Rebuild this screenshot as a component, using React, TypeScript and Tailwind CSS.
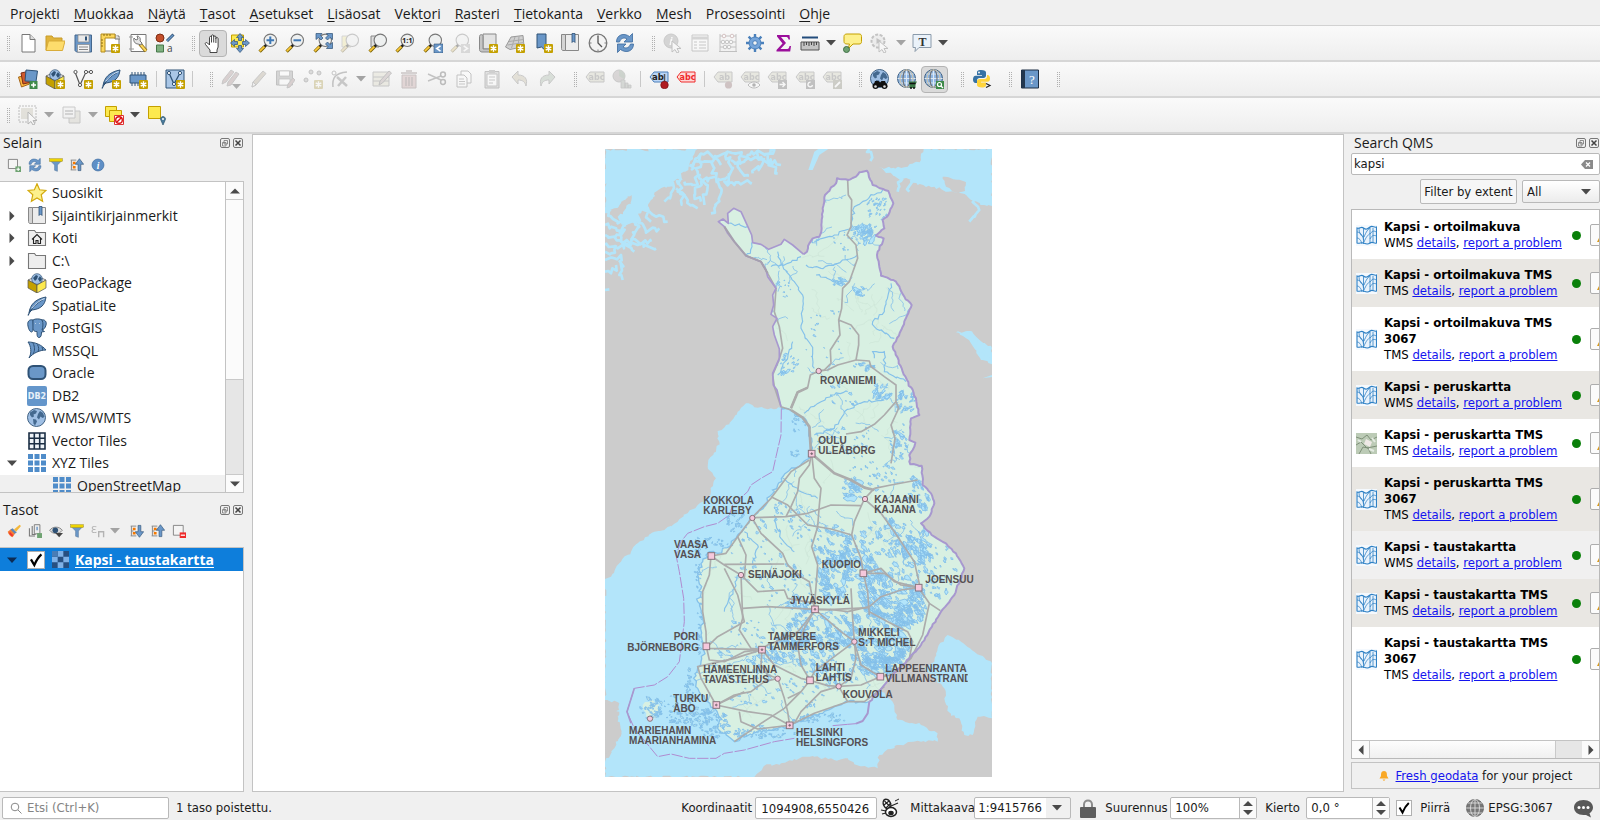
import React from "react";

type Kids = { children?: React.ReactNode };

/* ---------- icon building blocks ---------- */

function Ico({ children, off, small }: Kids & { off?: boolean; small?: boolean }) {
  return (
    <svg
      viewBox="0 0 20 20"
      aria-hidden="true"
      className={(small ? "size-[14px]" : "size-5") + " shrink-0 " + (off ? "opacity-35 saturate-50" : "")}
    >
      {children}
    </svg>
  );
}

const B = "#6a97c8";
const D = "#2f5276";

const NewBadge = () => (
  <g>
    <rect x="11" y="11" width="9" height="9" rx="1" fill="#c4a000" />
    <path d="M15.5 12.3v6.4M12.7 13.9l5.6 3.2M18.3 13.9l-5.6 3.2" stroke="#fff" strokeWidth="1.4" />
  </g>
);

const Lens = ({ fill = "#eef0f0" }: { fill?: string }) => (
  <g>
    <circle cx="12.3" cy="7.3" r="6.2" fill={fill} stroke="#777" strokeWidth="1.1" />
    <path d="M8.2 12 6 14.2" stroke="#222" strokeWidth="2.6" />
    <path d="M6.6 13.6 1.6 18.6" stroke="#7a6100" strokeWidth="3.2" />
    <path d="M6.4 13.6 1.8 18.2" stroke="#fbc93c" strokeWidth="1.8" />
  </g>
);

const Globe = ({ grid }: { grid?: boolean }) => (
  <g>
    <circle cx="9.5" cy="9.5" r="9" fill={grid ? "#8db5e2" : "#9fbfe4"} stroke={D} strokeWidth=".9" />
    {grid ? (
      <g fill="none" strokeWidth="1.1">
        <path d="M9.5 .6v18M.6 9.5h18M2.5 5h14M2.5 14h14" stroke="#dde9f5" />
        <ellipse cx="9.5" cy="9.5" rx="3.500" ry="8.800" stroke="#6f6f6f" />
        <ellipse cx="9.5" cy="9.5" rx="6.500" ry="8.800" stroke="#c9c2ae" />
      </g>
    ) : (
      <g fill="#44698f">
        <path d="M3 4.500 7 2l3 1-1 2.500-2.500 1 .5 2-2 1-2-2.500z" />
        <path d="M6 11l3 .5 1 2-2 4-1.500-2z" />
        <path d="M11 6l2-3 3 2 1.500 4-2 1-2-1.500-1.500 3-2-2z" />
      </g>
    )}
  </g>
);

const Refresh = () => (
  <g fill={B} stroke="#3b6a9e" strokeWidth=".8">
    <path d="M1.500 9C1.500 1.500 9-.5 14.500 3.500l3-3V9H9l3-3C9 4 5.500 5.500 4.500 9z" />
    <path d="M18.500 11C18.500 18.500 11 20.500 5.500 16.500l-3 3V11H11l-3 3c3 2 6.500.5 7.500-3z" />
  </g>
);

const Pencil = () => (
  <g>
    <path d="M4 18l1-5L15 2l3 2.500L8 16z" fill="#b9a47c" stroke="#777" />
    <path d="M4 18l1-5 3 3z" fill="#eee" stroke="#777" />
  </g>
);

const Tag = ({ fill = "#cfcfa8", ink = "#777", y = 0, t = "abc" }: { fill?: string; ink?: string; y?: number; t?: string }) => (
  <g>
    <path d={`M1 ${8 + y}l4-5h14v10H5z`} fill={fill} stroke={ink} strokeWidth="1" />
    <text x="11.500" y={11 + y} fontSize="8" fontWeight="bold" textAnchor="middle" fill={ink} className="font-['DejaVu_Sans']">
      {t}
    </text>
  </g>
);

const Cursor = () => <path d="M9 8v11l3-2.500 2 3.500 2-1-2-3.500h4z" fill="#fff" stroke="#666" />;

const Page = () => <path d="M3 1.500h15v17H3z" fill="#fff" stroke="#777" />;

const Scroll = () => (
  <g>
    <path d="M5 1h13v15H5z" fill="#e3e3e3" stroke="#888" />
    <path d="M1.500 3.500C1.500 1 5 1 5 3.500V16h10v3H4c-1.500 0-2.500-1-2.500-2.500z" fill="#c4c4c4" stroke="#888" />
  </g>
);

const Book = () => (
  <g>
    <path d="M5.500 1.500h13v16h-13z" fill="#ececec" stroke="#888" />
    <path d="M1.500 1.500h4v16H3c-1 0-1.500-1-1.500-2z" fill="#d4d4d4" stroke="#888" />
    <path d="M12 .5h3v9l-1.500-1.500L12 9.500z" fill={B} stroke={D} strokeWidth=".8" />
  </g>
);

const Funnel = () => (
  <g>
    <path d="M1 3h18l-7 7v9l-4-1.500V10z" fill={B} stroke="#57799c" strokeWidth=".8" />
    <rect x="1" y="1" width="18" height="4" fill="#edd400" stroke="#a58f20" strokeWidth=".7" />
  </g>
);

const TreeArrow = ({ down }: { down?: boolean }) => (
  <g>
    <path d="M1 3h8M1 17h8M2 3v14M2 10h3" stroke="#888" strokeWidth="1.400" fill="none" />
    <path d="M4 5.500h4v3.500H4zM4 11.500h4V15H4z" fill="#f57900" />
    <path d={down ? "M11.500 2h4v9h4L13.500 19l-6-8h4z" : "M11.500 18h4V9h4L13.500 1l-6 8h4z"} fill={B} stroke={D} strokeWidth=".9" />
  </g>
);

const Cube = () => (
  <g strokeLinejoin="round" strokeWidth=".7">
    <path d="M1 7l9-4 9 4-9 5z" fill="#eee" stroke="#555" />
    <circle cx="10" cy="6" r="5.300" fill="#9fbfe4" stroke={D} />
    <path d="M6 5l3-3 2 1-1 3-2 2zM11 6l2-3 2 3-2 3z" fill="#2f5276" />
    <path d="M1 7l9 5v8l-9-5z" fill="#c4a000" stroke="#555" />
    <path d="M19 7l-9 5v8l9-5z" fill="#fce94f" stroke="#555" />
  </g>
);

const Feather = () => (
  <g>
    <path d="M2 17C3 9 8 3 19 1c-1 8-5 12-14 13z" fill={B} stroke={D} />
    <path d="M1 19.500C4 12 9 7 16 3.500" fill="none" stroke={D} strokeWidth="1.200" />
    <path d="M4.500 12.500c4-5 8-8 13-10" stroke="#cfe0f2" fill="none" />
  </g>
);

const FolderShape = () => <path d="M1.500 2.500h6l1.500 2h9.500v13h-17z" fill="#eeeeee" stroke="#777" strokeWidth="1.100" />;

const TileGrid = () => (
  <g fill="#4f8cc9">
    {[1, 7.500, 14].map((y) => [1, 7.500, 14].map((x) => <rect key={x + "-" + y} x={x} y={y} width="5" height="5" />))}
  </g>
);

const MapSheet = () => (
  <svg viewBox="0 0 21 21" aria-hidden="true" className="size-[21px] shrink-0 bg-[#f4f9fe]">
    <g fill="none" stroke="#2e80c4" strokeWidth="1.100">
      <path d="M1 3c3 1 4-2 6.500 0s4 1 6.500-1 4 1 6.500 0v16c-2.500 1-4-2-6.500 0s-4 1-6.500 0-4 1-6.500 0z" fill="#eaf3fc" />
      <path d="M7.500 3v16M14 2.500v16M1 7c3 0 6 3 6.500 8M3 3c0 5 2 8 4.500 9M8 12c2-5 4-8 6-9M8 17c2-5 4-7 6-8.500M14 9c3-4 4-3 6.500-2M14 14c2-4 4-4 6.500-3M17 3v15M1 13c2 0 4 2 5 6" strokeWidth=".8" />
    </g>
  </svg>
);

const Thumb = () => (
  <svg viewBox="0 0 21 21" aria-hidden="true" className="size-[21px] shrink-0">
    <rect width="21" height="21" fill="#bccbb6" />
    <path d="M0 4l6 2 5-4 4 5 6-3M0 12l5-3 6 6 10-2M3 21l4-7 5 1 3 6" stroke="#7f9079" fill="none" />
    <path d="M10 6l6 3-2 5-6-3z" fill="#efe9e6" />
    <path d="M2 7l3 2M13 16l5 2M16 5l3 4" stroke="#e4ebe2" strokeWidth="2" />
  </svg>
);

const Arrow = ({ off }: { off?: boolean }) => (
  <svg viewBox="0 0 10 6" aria-hidden="true" className="h-[6px] w-[10px] shrink-0">
    <path d="M0 0h10L5 5.500z" fill={off ? "#a3a3a3" : "#4a4a4a"} />
  </svg>
);

/* ---------- toolbar pieces ---------- */

function Tool({ label, children, on, off }: Kids & { label: string; on?: boolean; off?: boolean }) {
  return (
    <button
      type="button"
      aria-label={label}
      className={
        "flex h-[27px] w-full items-center justify-center rounded-sm " +
        (on ? "border border-[#b4b4b4] bg-[#dadada]" : "")
      }
    >
      <Ico off={off}>{children}</Ico>
    </button>
  );
}

const Row = ({ children }: Kids) => (
  <div role="toolbar" className="flex h-9 shrink-0 items-center border-b-2 border-[#d6d6d6] bg-linear-to-b from-[#fafafa] to-[#eeeeee]">
    {children}
  </div>
);

const Grip = ({ first }: { first?: boolean }) => (
  <span className={(first ? "w-[14px]" : "w-5") + " flex shrink-0 justify-end gap-px pr-1"}>
    <span className="h-[15px] border-l border-dotted border-[#b0b0b0]" />
    <span className="h-[15px] border-l border-dotted border-[#b0b0b0]" />
  </span>
);

const Sep = () => (
  <span className="flex w-[9px] shrink-0 justify-center">
    <span className="h-4 w-px bg-[#c8c8c8]" />
  </span>
);

const Drop = ({ off, label }: { off?: boolean; label: string }) => (
  <button type="button" aria-label={label} className="flex h-[27px] w-[14px] shrink-0 items-center justify-center">
    <Arrow off={off} />
  </button>
);

const Group = ({ w, children }: Kids & { w: string }) => (
  <div className={"grid shrink-0 auto-cols-fr grid-flow-col " + w}>{children}</div>
);

/* ---------- header ---------- */

const menus: [string, number][] = [
  ["Projekti", -1], ["Muokkaa", 0], ["Näytä", 0], ["Tasot", 0], ["Asetukset", 0], ["Lisäosat", 0], ["Vektori", 4],
  ["Rasteri", 0], ["Tietokanta", 0], ["Verkko", 0], ["Mesh", 0], ["Prosessointi", -1], ["Ohje", 0],
];

function MenuBar() {
  return (
    <nav className="flex h-[26px] shrink-0 items-center gap-[14px] border-b border-[#d2d2d2] bg-[#f0f0f0] pt-[2px] pl-[10px] text-[14px] leading-5">
      {menus.map(([name, at]) => (
        <button type="button" key={name}>
          {at < 0 ? name : (
            <>
              {name.slice(0, at)}
              <span className="underline underline-offset-2">{name[at]}</span>
              {name.slice(at + 1)}
            </>
          )}
        </button>
      ))}
    </nav>
  );
}

function Toolbars() {
  return (
    <>
      <Row>
        <Grip first />
        <Group w="w-[165px]">
          <Tool label="Uusi projekti"><path d="M4 1.500h8l5 5V19H4z" fill="#fff" stroke="#777" /><path d="M12 1.500v5h5" fill="#ddd" stroke="#777" /></Tool>
          <Tool label="Avaa projekti"><path d="M1 17V3h6l1.500 2H17v4" fill="#e0b43c" stroke="#c89b28" /><path d="M1 17.500 3.500 8H20l-2.500 9.500z" fill="#fddc6c" stroke="#d9ac39" /></Tool>
          <Tool label="Tallenna"><path d="M2 2h16.500v17H3.500L2 17.500z" fill={B} stroke="#45678c" /><path d="M5 2h11v7H5z" fill="#e9e9e9" stroke="#888" strokeWidth=".7" /><path d="M12 3.500h2v4h-2z" fill={D} /><path d="M4.500 11.500h12V19h-12z" fill="#f4f4f4" stroke="#888" strokeWidth=".7" /><path d="M6 14h9M6 16.500h9" stroke="#888" /></Tool>
          <Tool label="Uusi tuloste"><path d="M4 3h15v15H4z" fill="#fff" stroke="#777" /><path d="M15 1v5h5" fill="#ddd" stroke="#777" /><path d="M1 1h14v4H5v14H1z" fill="#fbd65b" stroke="#b48d1e" /><path d="M4 1v2M7 1v2M10 1v2M1 7h2M1 10h2M1 13h2" stroke="#8a6a12" /><NewBadge /></Tool>
          <Tool label="Tulosteiden hallinta"><Page /><path d="M1 4h4M1 16h5" stroke="#999" /><path d="M12 11l6 7" stroke="#8a6a12" strokeWidth="3.600" /><path d="M12 11l6 7" stroke="#fbd65b" strokeWidth="2" /><path d="M6 5c-1 3 1 6 4 6l3 1 1-2-2-2c1-3-1-5-3-5l1 3-2 1z" fill="#e6e6e6" stroke="#777" /></Tool>
          <Tool label="Tyylien hallinta"><circle cx="5" cy="5" r="4" fill="#c44f2b" stroke="#7f2d14" /><path d="M12 8l6.500-6.500" stroke={D} strokeWidth="3" /><path d="M12 8l6-6" stroke={B} strokeWidth="1.500" /><path d="M1.500 12h7v7h-7z" fill="#7fb080" stroke="#46784a" /><text x="12" y="18.500" fontSize="10" fill="#444">a</text></Tool>
        </Group>
        <Grip />
        <Group w="w-[440px]">
          <Tool on label="Siirrä karttaa"><path d="M7 19.500v-2.500L2.500 11.500c-1-1.500.8-2.600 2-1.500L6.500 12V4.500c0-1.500 2-1.500 2 0V3c0-1.600 2.200-1.600 2.200 0v1c0-1.500 2.200-1.500 2.200 0v1.500c0-1.500 2.200-1.300 2.200.2v8.300L14 17v2.500z" fill="#fff" stroke="#333" strokeWidth=".9" /><path d="M8.500 4.500v5M10.700 4v5.500M12.900 5v5" stroke="#333" strokeWidth=".9" /></Tool>
          <Tool label="Siirrä valintaan"><path d="M1.500 2h12v12h-12z" fill="#fce94f" stroke="#c4a000" /><g fill={B} stroke={D} strokeWidth=".7"><path d="M10 .5l3.500 4h-2v3h-3v-3h-2zM10 19.500l3.500-4h-2v-3h-3v3h-2zM.5 10l4-3.500v2h3v3h-3v2zM19.500 10l-4-3.500v2h-3v3h3v2z" /></g></Tool>
          <Tool label="Lähennä"><Lens /><path d="M12.300 3.500v7.600M8.500 7.300h7.600" stroke="#3f78b5" strokeWidth="2" /></Tool>
          <Tool label="Loitonna"><Lens /><path d="M8.500 7.300h7.600" stroke="#3f78b5" strokeWidth="2" /></Tool>
          <Tool label="Koko laajuus"><Lens /><g fill={B} stroke={D} strokeWidth=".7"><path d="M3 .5h6L7.500 2.500l2.500 2.500-2 2L5.500 4.500 3 6.500zM19.500.5h-6L15 2.500l-2.500 2.500 2 2L17 4.500l2.500 2zM19.500 15.500h-6l1.500-2-2.500-2.500 2-2 2.500 2.500 2.500-2z" /></g></Tool>
          <Tool off label="Lähennä valintaan"><path d="M2 3h9v11H2z" fill="#fce94f" stroke="#999" /><Lens /></Tool>
          <Tool label="Lähennä tasoon"><path d="M3 3h8v11H3z" fill="#ddd" stroke="#888" /><Lens /></Tool>
          <Tool label="Alkuperäinen tarkkuus"><Lens /><text x="12.300" y="10" fontSize="7.500" fontWeight="bold" textAnchor="middle" fill="#222">1:1</text></Tool>
          <Tool label="Edellinen näkymä"><Lens /><path d="M11 11h9v9h-9z" fill={B} stroke={D} strokeWidth=".6" /><path d="M17.500 12.800l-3.800 2.700 3.800 2.700" stroke="#fff" strokeWidth="1.600" fill="none" /></Tool>
          <Tool off label="Seuraava näkymä"><Lens /><path d="M11 11h9v9h-9z" fill="#aaa" /><path d="M13.700 12.800l3.800 2.700-3.800 2.700" stroke="#fff" strokeWidth="1.600" fill="none" /></Tool>
          <Tool label="Uusi karttanäkymä"><Scroll /><NewBadge /></Tool>
          <Tool label="Uusi 3D-näkymä"><path d="M6 4l12-1.500 1 11-14 3-4.500-2.500z" fill="#d0d0d0" stroke="#999" /><path d="M4 8.500l14.500-2M2.500 12l16.500-2.500M10 4 6.500 15M14 3.500l-1 11" stroke="#aaa" /><NewBadge /></Tool>
          <Tool label="Uusi kirjanmerkki"><path d="M4 1h9v17l-4.500-4L4 15z" fill={B} stroke={D} /><NewBadge /></Tool>
          <Tool label="Kirjanmerkit"><Book /></Tool>
          <Tool label="Ajan hallinta"><circle cx="10" cy="10" r="8.800" fill="#f3f3f3" stroke="#777" strokeWidth="1.300" /><path d="M10 3v7l4 4" stroke="#555" strokeWidth="1.300" fill="none" /><path d="M10 2v1.500M10 16.500V18M2 10h1.500M16.500 10H18" stroke="#777" /></Tool>
          <Tool label="Päivitä"><Refresh /></Tool>
        </Group>
        <Grip />
        <Group w="w-[165px]">
          <Tool off label="Tunnista kohteet"><circle cx="8" cy="8" r="7" fill="#999" stroke="#777" /><text x="8" y="12" fontSize="11" fontWeight="bold" fontStyle="italic" textAnchor="middle" fill="#fff">i</text><Cursor /></Tool>
          <Tool off label="Attribuuttitaulu"><path d="M2 2h16v16H2z" fill="#fff" stroke="#777" /><path d="M2 5h16" stroke="#999" strokeWidth="3" /><path d="M4 9h3M9 9h7M4 12h3M9 12h7M4 15h3M9 15h7" stroke="#777" /></Tool>
          <Tool off label="Kenttälaskin"><path d="M2 1v18M18 1v18M1 18.500h18M2 3h16M2 9h16M2 14h16" stroke="#666" /><g fill="#fff" stroke="#666"><circle cx="6" cy="3" r="1.800" stroke="#b55" /><circle cx="14" cy="3" r="1.800" stroke="#b55" /><circle cx="5" cy="9" r="1.800" /><circle cx="9" cy="9" r="1.800" /><circle cx="13" cy="9" r="1.800" /><circle cx="7" cy="14" r="1.800" /><circle cx="11" cy="14" r="1.800" /></g></Tool>
          <Tool label="Työkalut"><path d="M10 1v18M1 10h18M3.600 3.600l12.800 12.800M16.400 3.600 3.600 16.400" stroke="#4a80bb" strokeWidth="2.400" /><circle cx="10" cy="10" r="6" fill="#76a5da" stroke="#4a80bb" /><circle cx="10" cy="10" r="2.300" fill="#f4f4f4" stroke="#4a80bb" /></Tool>
          <Tool label="Tilastot"><path d="M4 2h12.500l.5 4.500h-1.500C15 4.500 14.500 4 12.500 4H8l5 6-5.500 6H13c2.500 0 3-.5 3.500-3H18l-.8 5.500H3.500V17L9.500 10.500 4 3.500z" fill="#9b0f9b" /></Tool>
          <Tool label="Mittaa"><path d="M2 4.500h16" stroke="#234d7c" strokeWidth="2" /><path d="M1 9h18v8H1z" fill="#c4c4c4" stroke="#555" /><path d="M4 9v4M6.500 9v3M9 9v4M11.500 9v3M14 9v4M16.500 9v3" stroke="#444" /></Tool>
        </Group>
        <Drop label="Mittausvalikko" />
        <Group w="w-14">
          <Tool label="Karttavihjeet"><path d="M5 1h12c2 0 2.500 1 2.500 2.500v5c0 2-1 2.500-2.500 2.500h-6l-5 5 1.500-5H5C3 11 2 10 2 8.500v-5C2 2 3 1 5 1z" fill="#fdf08d" stroke="#c4a000" /><circle cx="4.500" cy="16.500" r="3" fill="#6fa372" stroke="#3f6f44" /></Tool>
          <Tool off label="Suorita toiminto"><circle cx="8" cy="8" r="6.500" fill="#ddd" stroke="#666" strokeWidth="2" strokeDasharray="3 1.500" /><path d="M6.500 5v6l5-3z" fill="#666" /><Cursor /></Tool>
        </Group>
        <Drop off label="Toimintovalikko" />
        <Group w="w-7">
          <Tool label="Tekstimerkintä"><path d="M1 1.500h18v13H7l-4 4 .5-4H1z" fill="#eaf2fa" stroke="#8a9aaa" /><text x="10.500" y="12.500" fontSize="12" fontWeight="bold" textAnchor="middle" fill="#333" className="font-['Liberation_Serif']">T</text></Tool>
        </Group>
        <Drop label="Merkintävalikko" />
      </Row>

      <Row>
        <Grip first />
        <Group w="w-[138px]">
          <Tool label="Tietolähteiden hallinta"><path d="M.5 8l9-2 2 9-8 3z" fill="#fcb93e" stroke="#a3641a" /><path d="M3 4l9-2 2 11-9 2z" fill="#cf5a2e" stroke="#7f2d14" /><path d="M8 1l11.500 1-1.500 10.500L7 12z" fill={B} stroke={D} /><path d="M11.500 12h8v8h-8z" fill="#3f8a4a" /><path d="M15.500 13.500v5M13 16h5" stroke="#fff" strokeWidth="1.500" /></Tool>
          <Tool label="Uusi GeoPackage"><Cube /><NewBadge /></Tool>
          <Tool label="Uusi Shapefile"><path d="M2 3l5 13L13 3h5" fill="none" stroke="#555" strokeWidth="1.200" /><g fill="#fff" stroke="#555"><circle cx="2.500" cy="3" r="1.600" /><circle cx="7" cy="16" r="1.600" /><circle cx="13" cy="3" r="1.600" /><circle cx="18" cy="3" r="1.600" /></g><NewBadge /></Tool>
          <Tool label="Uusi SpatiaLite"><Feather /><NewBadge /></Tool>
          <Tool label="Uusi muistitaso"><path d="M4 3v14M7 3v14M10 3v14M13 3v14M16 3v14" stroke={D} /><path d="M2 6h16v8H2z" fill={B} stroke={D} /><NewBadge /></Tool>
        </Group>
        <Sep />
        <Group w="w-[27px]">
          <Tool label="Uusi virtuaalitaso"><path d="M1 1h18v18H1z" fill="#a9c6e6" stroke={D} /><path d="M4 4l5 11 6-11" fill="none" stroke={D} strokeWidth="1.300" /><circle cx="4" cy="4" r="1.600" fill="#fff" stroke={D} /><circle cx="9" cy="15" r="1.600" fill="#fff" stroke={D} /><circle cx="15" cy="4" r="1.600" fill="#fff" stroke={D} /><NewBadge /></Tool>
        </Group>
        <Sep />
        <Grip />
        <Group w="w-[137px]">
          <Tool off label="Muokkaukset"><path d="M1 15l1-4L10 1l3 2L5 13z" fill="#b88" stroke="#777" /><path d="M6 17l1-4L15 3l3 2-8 11z" fill="#b88" stroke="#777" /><path d="M11 15h9l-4.500 5z" fill="#333" /></Tool>
          <Tool off label="Muokkaustila"><Pencil /></Tool>
          <Tool off label="Tallenna muokkaukset"><path d="M1.500 2h16v14h-16z" fill="#999" stroke="#666" /><path d="M4.500 2h10v5h-10zM4 10h11v6H4z" fill="#fff" stroke="#666" strokeWidth=".7" /><path d="M12 19l1-4 5-6 2 2-5 7z" fill="#b88" stroke="#777" /></Tool>
          <Tool off label="Lisää piste"><g fill="#aaa" stroke="#666"><circle cx="3" cy="11" r="2" /><circle cx="8" cy="3" r="2" /><circle cx="16" cy="4" r="2" /></g><NewBadge /></Tool>
          <Tool off label="Solmutyökalu"><path d="M3 18C2 9 5 4 17 3" fill="none" stroke="#666" strokeWidth="1.500" /><circle cx="4" cy="4" r="2" fill="#fff" stroke="#666" /><path d="M7 8l10 9M16 8 8 17" stroke="#777" strokeWidth="2.500" /></Tool>
        </Group>
        <Drop off label="Solmuvalikko" />
        <Group w="w-[193px]">
          <Tool off label="Muokkaa attribuutteja"><path d="M1 3h16v14H1z" fill="#ddd8b0" stroke="#777" /><path d="M1 8h16M1 12h16" stroke="#777" /><path d="M7 16l1-4 9-10 2.500 2-9 10z" fill="#b99" stroke="#666" /></Tool>
          <Tool off label="Poista valitut"><path d="M3 6h14v13H3z" fill="#d99" stroke="#866" /><path d="M2 4h16M7 2h6M7 8v9M10 8v9M13 8v9" stroke="#866" strokeWidth="1.500" /></Tool>
          <Tool off label="Leikkaa"><path d="M1 5l13 6M1 12l13-5" stroke="#666" strokeWidth="1.500" /><circle cx="16" cy="5.500" r="2.400" fill="none" stroke="#555" strokeWidth="1.500" /><circle cx="16" cy="13" r="2.400" fill="none" stroke="#555" strokeWidth="1.500" /></Tool>
          <Tool off label="Kopioi"><path d="M7 2h7l3 3v9H7z" fill="#fff" stroke="#666" /><path d="M3 6h7l3 3v9H3z" fill="#fff" stroke="#666" /><path d="M5 10h5M5 12.500h6M5 15h6" stroke="#777" /></Tool>
          <Tool off label="Liitä"><path d="M3 2.500h14V19H3z" fill="#bbb" stroke="#666" /><path d="M5 5h10v12H5z" fill="#fff" stroke="#777" /><path d="M7 1h6v3H7z" fill="#888" /><path d="M7 8h6M7 11h6M7 14h4" stroke="#777" /></Tool>
          <Tool off label="Kumoa"><path d="M2 8l6-6v4c7 0 10 4 8 11-1-4-3-6-8-6v4z" fill="#cb8" stroke="#777" /></Tool>
          <Tool off label="Tee uudelleen"><path d="M18 8l-6-6v4c-7 0-10 4-8 11 1-4 3-6 8-6v4z" fill="#9b9" stroke="#777" /></Tool>
        </Group>
        <Grip />
        <Group w="w-[55px]">
          <Tool off label="Nimiöt"><Tag /></Tool>
          <Tool off label="Kaaviot"><circle cx="7" cy="7" r="6" fill="#a99" stroke="#777" /><path d="M7 7V1a6 6 0 0 1 5 9z" fill="#797" /><path d="M9 11h4v8H9zM13 14h3v5h-3zM16 16h3v3h-3z" fill="#9a9" stroke="#777" strokeWidth=".8" /></Tool>
        </Group>
        <Sep />
        <Group w="w-[55px]">
          <Tool label="Kiinnitetyt nimiöt"><Tag fill="#bcd6f5" ink="#4b7fba" t="" /><text x="9" y="11" fontSize="8.500" fontWeight="bold" textAnchor="middle" fill="#222" className="font-['DejaVu_Sans']">ab</text><path d="M15.500 5v9" stroke="#555" strokeWidth="1.500" /><circle cx="15.500" cy="16" r="3.800" fill="#b01c22" stroke="#6d0d12" strokeWidth=".6" /></Tool>
          <Tool label="Sijoittamattomat nimiöt"><Tag fill="#ffd9d9" ink="#ee2a2a" /></Tool>
        </Group>
        <Sep />
        <Group w="w-[137px]">
          <Tool off label="Kiinnitä nimiö"><Tag t="ab" /><circle cx="15.500" cy="16" r="3.600" fill="#a66" /></Tool>
          <Tool off label="Näytä nimiö"><Tag /><path d="M8 16c3-4 9-4 12 0-3 4-9 4-12 0z" fill="#fff" stroke="#555" /><circle cx="14" cy="16" r="1.800" fill="#444" /></Tool>
          <Tool off label="Siirrä nimiö"><Tag /><path d="M11 11h9v9h-9z" fill="#666" /><path d="M12.500 15.500h5M15.500 13l2.500 2.500-2.500 2.500" stroke="#fff" strokeWidth="1.400" fill="none" /></Tool>
          <Tool off label="Kierrä nimiö"><Tag /><path d="M11 11h9v9h-9z" fill="#666" /><path d="M17.500 16a2.300 2.300 0 1 1-2-2.800" stroke="#fff" strokeWidth="1.400" fill="none" /></Tool>
          <Tool off label="Muuta nimiö"><Tag /><path d="M11 11h9v9h-9z" fill="#886" /><path d="M13 18l5-5" stroke="#fff" strokeWidth="1.800" /></Tool>
        </Group>
        <Grip />
        <Group w="w-[82px]">
          <Tool label="MetaSearch"><Globe /><path d="M3 18l2-6h3.500l1.500 1.500L11.500 12H15l2.500 6z" fill="#111" /><circle cx="5.500" cy="17" r="3" fill="#111" /><circle cx="14.500" cy="17" r="3" fill="#111" /><circle cx="5.500" cy="17.500" r="1.300" fill="#ddd" /><circle cx="14.500" cy="17.500" r="1.300" fill="#ddd" /></Tool>
          <Tool label="QuickMapServices"><Globe grid /><path d="M11.500 12.500h8.500l-1.500 3v3.500h-6v-3.500z" fill="#3d7a49" /><path d="M12.500 14.500h6M13 19h2M16 19h2" stroke="#111" strokeWidth="1.500" /></Tool>
          <Tool on label="Search QMS"><Globe grid /><path d="M12 12h8v8h-8z" fill="#3d8a49" /><circle cx="15.500" cy="15.500" r="2" fill="none" stroke="#fff" strokeWidth="1.200" /><path d="M17 17l2 2" stroke="#fff" strokeWidth="1.200" /></Tool>
        </Group>
        <Grip />
        <Group w="w-7">
          <Tool label="Python-konsoli"><path d="M9 1c-3.500 0-4 1.200-4 2.500V6h5v.8H3.500C2 6.800 1 8.300 1 10.500S2 14 3.500 14H5v-2.500C5 10 6 9 7.500 9h4C13 9 14 8 14 6.500v-3C14 2 12.500 1 9 1z" fill="#3672a4" /><path d="M10 18.500c3.500 0 4-1.200 4-2.500v-2.500H9v-.8h6.500c1.500 0 2.500-1 2.500-3.200S17 6 15.500 6H15v1.500C15 9 14 10 12.500 10h-5C6 10 5 11 5 12.500V16c0 1.500 1.500 2.500 5 2.500z" fill="#ffd43b" /><circle cx="7" cy="3.500" r=".9" fill="#fff" /><path d="M14 14.500l4 2-4 2" fill="none" stroke="#222" strokeWidth="1.200" /></Tool>
        </Group>
        <Grip />
        <Group w="w-7">
          <Tool label="Ohje"><path d="M1.500 1h17v18h-17z" fill={B} stroke="#1c2e44" /><path d="M1.500 1H5v18H1.500z" fill="#22374f" /><text x="12" y="14.500" fontSize="13" textAnchor="middle" fill="#fff" className="font-['Liberation_Serif']">?</text></Tool>
        </Group>
        <Grip />
      </Row>

      <Row>
        <Grip first />
        <Group w="w-7">
          <Tool off label="Valitse kohteet"><path d="M1 1h17v16H1z" fill="none" stroke="#555" strokeDasharray="2 1" /><path d="M3 3h12v11H3z" fill="#c2bd9a" /><path d="M10 7v12l3-2.500 2 3.500 2-1-2-3.500h4z" fill="#fff" stroke="#444" /></Tool>
        </Group>
        <Drop off label="Valintatavat" />
        <Group w="w-[30px]">
          <Tool off label="Valitse arvolla"><path d="M8 6h11v12H8z" fill="#cfcbae" stroke="#777" /><path d="M2 2h12v11H2z" fill="#eee" stroke="#777" /><path d="M4 6h8M4 9h8" stroke="#777" strokeWidth="1.500" /></Tool>
        </Group>
        <Drop off label="Arvovalikko" />
        <Group w="w-7">
          <Tool label="Poista valinta"><path d="M1.500 1.500h11v10h-11z" fill="#fce94f" stroke="#c4a000" /><path d="M5.500 5.500h12v11h-12z" fill="#fce94f" stroke="#c4a000" /><path d="M10.500 10.500h9v9h-9z" fill="#fff" stroke="#d33" /><circle cx="15" cy="15" r="3.300" fill="none" stroke="#d11" strokeWidth="1.400" /><path d="M12.700 17.300l4.600-4.600" stroke="#d11" strokeWidth="1.400" /></Tool>
        </Group>
        <Drop label="Poistovalikko" />
        <Group w="w-[30px]">
          <Tool label="Valitse sijainnilla"><path d="M1.500 1.500h12v12h-12z" fill="#fce94f" stroke="#c4a000" /><path d="M16 20l-2-4.500a2.500 2.500 0 1 1 4 0z" fill="#4a7a9c" stroke="#2d566f" strokeWidth=".7" /><circle cx="16" cy="14" r="1" fill="#fff" /></Tool>
        </Group>
      </Row>
    </>
  );
}

/* ---------- docks ---------- */

function DockTitle({ title }: { title: string }) {
  return (
    <div className="flex h-[18px] shrink-0 items-center gap-[3px] pr-px pl-[3px]">
      <h2 className="flex-1 text-[14px] leading-[18px]">{title}</h2>
      <button type="button" aria-label="Irrota paneeli" className="size-[10px]">
        <svg viewBox="0 0 10 10" className="size-[10px]"><rect x=".5" y=".5" width="9" height="9" rx="1.500" fill="none" stroke="#777" /><path d="M4 2.500h3.500V6H4zM2.500 4.500H6V8H2.500z" fill="#f0f0f0" stroke="#777" strokeWidth=".8" /></svg>
      </button>
      <button type="button" aria-label="Sulje paneeli" className="size-[10px]">
        <svg viewBox="0 0 10 10" className="size-[10px]"><rect x=".5" y=".5" width="9" height="9" rx="1.500" fill="none" stroke="#777" /><path d="M2.500 2.500l5 5M7.500 2.500l-5 5" stroke="#444" strokeWidth="1.500" /></svg>
      </button>
    </div>
  );
}

const Mini = ({ label, children, off }: Kids & { label: string; off?: boolean }) => (
  <button type="button" aria-label={label} className="flex w-[21px] items-center justify-center">
    <Ico small off={off}>{children}</Ico>
  </button>
);

const tree: { name: string; icon: React.ReactNode; open?: "closed" | "open"; nested?: boolean }[] = [
  { name: "Suosikit", icon: <path d="M10 .8l2.600 6 6.400.6-4.800 4.300 1.400 6.500L10 14.900l-5.600 3.300 1.400-6.500L1 7.400l6.400-.6z" fill="#fdf18c" stroke="#d3a90c" strokeWidth="1.200" /> },
  { name: "Sijaintikirjainmerkit", icon: <Book />, open: "closed" },
  { name: "Koti", open: "closed", icon: <><FolderShape /><path d="M5 11.500l5-5 5 5M6.500 10.500v5h2.500v-3h2v3h2.500v-5" fill="none" stroke="#222" strokeWidth="1.100" /></> },
  { name: "C:\\", open: "closed", icon: <FolderShape /> },
  { name: "GeoPackage", icon: <Cube /> },
  { name: "SpatiaLite", icon: <Feather /> },
  { name: "PostGIS", icon: <g fill={B} stroke={D} strokeWidth="1"><path d="M6 2C2 1 0 4 1 8c.5 3 2 6 3.500 6C6 14 6 11 6.500 10z" /><path d="M14 2c4-1 6 2 5 5-.5 3-3 5-4 5z" /><path d="M6 2c2-1.500 7-1.500 9 0 1.500 3 1 7 0 10l2.500 1.500-3 .5c0 3-.5 5.500-2.500 5.500S10 17 10 13.500C7.500 14 5.500 12 6 9z" /><path d="M8 5.500h.5M12.500 5.500h.5" stroke="#fff" /></g> },
  { name: "MSSQL", icon: <g fill={B} stroke={D}><path d="M1 1c7 0 14 3 18 8-6 0-13 3-17 8 3-5 2-12-1-16z" /><path d="M6 2c2 4 2 8 0 11M10.500 3.500c1.500 3 1.500 5 .5 7M15 6c.7 1.500.7 2.500 0 3.500" fill="none" /></g> },
  { name: "Oracle", icon: <rect x="1.500" y="3" width="17" height="13" rx="4.500" fill={B} stroke={D} strokeWidth="2" /> },
  { name: "DB2", icon: <><rect x="0" y="0" width="20" height="20" rx="2" fill="#6496cb" /><text x="10" y="13" fontSize="8" fontWeight="bold" textAnchor="middle" fill="#e8f0f8" className="font-['DejaVu_Sans']">DB2</text></> },
  { name: "WMS/WMTS", icon: <Globe /> },
  { name: "Vector Tiles", icon: <><path d="M2 2h16v16H2z" fill="#eef3f8" stroke="#1b2e44" strokeWidth="1.600" /><path d="M7.300 2v16M12.700 2v16M2 7.300h16M2 12.700h16" stroke="#1b2e44" strokeWidth="1.600" /></> },
  { name: "XYZ Tiles", icon: <TileGrid />, open: "open" },
  { name: "OpenStreetMap", icon: <TileGrid />, nested: true },
];

function ScrollArrow({ d, label }: { d: string; label: string }) {
  return (
    <button type="button" aria-label={label} className="flex size-[17px] shrink-0 items-center justify-center bg-[#fbfbfb]">
      <svg viewBox="0 0 10 10" className="size-[10px]"><path d={d} fill="#4a4a4a" /></svg>
    </button>
  );
}

function Browser() {
  return (
    <section className="flex h-[359px] shrink-0 flex-col">
      <DockTitle title="Selain" />
      <div className="flex h-[29px] shrink-0 items-center pb-1 pl-[3px]">
        <Mini label="Lisää valitut tasot"><path d="M2 2h13v13H2z" fill="#f4f4f4" stroke="#777" strokeWidth="1.200" /><path d="M12 12h8v8h-8z" fill="#6fa372" /><path d="M16 13.500v5M13.500 16h5" stroke="#fff" strokeWidth="1.500" /></Mini>
        <Mini label="Päivitä selain"><Refresh /></Mini>
        <Mini label="Suodata selain"><Funnel /></Mini>
        <Mini label="Supista kaikki"><TreeArrow /></Mini>
        <Mini label="Ominaisuudet"><circle cx="10" cy="10" r="8.500" fill="#5e8fc6" stroke="#3c6ba0" /><text x="10" y="15" fontSize="14" fontStyle="italic" fontWeight="bold" textAnchor="middle" fill="#fff" className="font-['Liberation_Serif']">i</text></Mini>
      </div>
      <div className="flex min-h-0 flex-1 overflow-hidden border border-l-0 border-[#c3c3c3] bg-white">
        <ul className="grid h-[315px] flex-1 shrink-0 auto-rows-fr text-[14px] leading-5">
          {tree.map((n) => (
            <li key={n.name} className={"flex items-center " + (n.nested ? "bg-[#f0f0f0] pl-[25px]" : "")}>
              <span className="flex w-[27px] justify-center pr-[3px]">
                {n.open && (
                  <svg viewBox="0 0 10 10" className="size-[10px]">
                    <path d={n.open === "open" ? "M0 2.500h10L5 8z" : "M2.500 0v10L7.500 5z"} fill="#4a4a4a" />
                  </svg>
                )}
              </span>
              <Ico>{n.icon}</Ico>
              <span className="pl-[5px] whitespace-nowrap">{n.name}</span>
            </li>
          ))}
        </ul>
        <div className="flex w-[18px] flex-col border-l border-[#c3c3c3] bg-[#e6e6e6]">
          <ScrollArrow label="Vieritä ylös" d="M0 7.500h10L5 2.500z" />
          <div className="h-[181px] border-y border-[#c9c9c9] bg-[#fbfbfb]" />
          <div className="flex-1 border-b border-[#c9c9c9]" />
          <ScrollArrow label="Vieritä alas" d="M0 2.500h10L5 7.500z" />
        </div>
      </div>
    </section>
  );
}

function Check({ label, size }: { label: string; size: string }) {
  return (
    <span className={"relative inline-flex shrink-0 " + size}>
      <input type="checkbox" id={label} aria-label={label} defaultChecked className={"appearance-none border border-[#b0b0b0] bg-white " + size} />
      <svg viewBox="0 0 16 16" className="pointer-events-none absolute inset-0 size-full"><path d="M3.500 7.500l3 5C8 9 10 5.500 12.800 3" fill="none" stroke="#000" strokeWidth="2" /></svg>
    </span>
  );
}

function Layers() {
  return (
    <section className="flex min-h-0 flex-1 flex-col pt-2">
      <DockTitle title="Tasot" />
      <div className="flex h-7 shrink-0 items-center pb-1 pl-[3px]">
        <Mini label="Tasojen tyylit"><path d="M1 11l5-4 6 6-4 6C5 18 2 15 1 11z" fill="#f57c35" /><path d="M3 14l4 4 2-2-5-5z" fill="#e33" /><path d="M5 8l6 6 3-2-6-6z" fill="#5b87b8" /><path d="M10 8l8-7 2 2-7 8z" fill="#f3b73c" /></Mini>
        <Mini label="Lisää ryhmä"><path d="M2 6v11h8M6 3v12h5" fill="none" stroke="#777" strokeWidth="1.500" /><path d="M9 1h8v13H9z" fill="#eee" stroke="#777" strokeWidth="1.300" /><path d="M12 4h2v5h-2z" fill={B} /><path d="M13 13h7v7h-7z" fill="#6fa372" /></Mini>
        <Mini label="Karttateemat"><path d="M1 9c4-6 14-6 18 0-4 6-14 6-18 0z" fill="#ddd" stroke="#666" /><circle cx="9" cy="9" r="4" fill={D} /><path d="M9 13h11l-5.500 6z" fill="#444" /></Mini>
        <Mini label="Suodata selite"><Funnel /></Mini>
        <Mini off label="Suodata lausekkeella"><text x="0" y="13" fontSize="18" fill="#444">ε</text><path d="M11 19v-8h7v8" stroke="#444" strokeWidth="2" fill="none" /></Mini>
        <Drop off label="Suodatusvalikko" />
        <span className="w-1" />
        <Mini label="Laajenna kaikki"><TreeArrow down /></Mini>
        <Mini label="Supista kaikki"><TreeArrow /></Mini>
        <Mini label="Poista taso"><path d="M2 2h14v14H2z" fill="#f4f4f4" stroke="#777" strokeWidth="1.200" /><path d="M11 12h9v8h-9z" fill="#ee2a2a" /><path d="M12.500 16h6" stroke="#fff" strokeWidth="1.800" /></Mini>
      </div>
      <div className="min-h-0 flex-1 border border-l-0 border-[#c3c3c3] bg-white">
        <div className="flex h-[23px] items-center bg-[#0e7edb] text-white">
          <span className="flex w-[27px] justify-center pr-[3px]"><svg viewBox="0 0 10 10" className="size-[10px]"><path d="M0 2.500h10L5 8z" fill="#0c2c55" /></svg></span>
          <Check label="Kapsi - taustakartta" size="size-[18px]" />
          <svg viewBox="0 0 18 18" className="ml-[7px] size-[17px] shrink-0">
            <path d="M0 0h18v18H0z" fill="#274f80" />
            <path d="M6 0h6v6H6zM0 6h6v6H0zM12 6h6v6h-6zM6 12h6v6H6z" fill="#7fb1e6" />
            <path d="M0 0h6v6H0z" fill="#4a7db5" />
          </svg>
          <span className="pl-[6px] text-[14px] leading-5 font-bold whitespace-nowrap underline underline-offset-2">Kapsi - taustakartta</span>
        </div>
      </div>
    </section>
  );
}

/* ---------- map ---------- */

function rng(seed: number) {
  let s = seed;
  return () => {
    s = (s * 1664525 + 1013904223) % 4294967296;
    return s / 4294967296;
  };
}

/* cluster: centre x, centre y, radius x, radius y, count, lake size, slope */
const clusters: number[][] = [
  [790, 260, 38, 30, 26, 18, -0.8], [835, 190, 45, 35, 34, 8, -0.7], [715, 412, 22, 12, 10, 14, 0.4], [778, 437, 18, 18, 9, 15, 0.2],
  [560, 660, 35, 35, 26, 8, -0.7], [545, 425, 30, 35, 14, 5, 0.4], [690, 570, 90, 90, 24, 5, 0.4], [740, 290, 50, 30, 16, 5, 0.4],
  [790, 665, 40, 14, 18, 10, 0.2], [845, 737, 30, 22, 20, 15, -0.6], [915, 770, 30, 35, 34, 10, -0.8], [740, 750, 60, 40, 16, 8, 0.5],
  [895, 890, 26, 60, 30, 12, 1.2], [740, 890, 110, 50, 34, 7, 0.4], [755, 1035, 30, 32, 18, 22, 0.3], [820, 1000, 90, 50, 40, 8, 0.7],
  [950, 1050, 40, 60, 44, 12, 1], [860, 1180, 80, 60, 56, 14, 1], [950, 1210, 45, 60, 54, 18, 1], [690, 1200, 60, 60, 60, 15, 1],
  [560, 1130, 80, 70, 34, 9, 0.6], [460, 1200, 90, 80, 30, 8, 0.8], [700, 1300, 50, 70, 70, 18, 0.9], [815, 1330, 40, 90, 76, 20, 1],
  [770, 1240, 50, 70, 50, 18, 1.1], [910, 1310, 60, 60, 40, 16, 0.8], [880, 1410, 80, 40, 84, 20, 0.8], [720, 1450, 70, 60, 70, 19, 0.9],
  [600, 1430, 40, 80, 60, 18, 1.1], [830, 1500, 100, 55, 96, 20, 0.7], [840, 1565, 65, 32, 74, 19, 0.4], [640, 1530, 60, 60, 56, 16, 1],
  [540, 1510, 50, 50, 42, 16, 0.9], [490, 1560, 50, 60, 30, 14, 1], [560, 1320, 90, 60, 34, 10, 0.7], [450, 1460, 70, 40, 22, 9, 0.5],
  [380, 1560, 60, 60, 18, 9, 0.7], [610, 1640, 80, 50, 26, 9, 0.8], [720, 1580, 60, 40, 34, 15, 0.9], [460, 1650, 80, 40, 16, 8, 0.5],
  [1020, 1280, 50, 80, 32, 12, 1], [945, 1380, 30, 50, 40, 18, 0.9], [420, 1770, 90, 40, 44, 10, 0.2],
];
const skerries: number[][] = [
  [270, 1715, 70, 30, 60, 9, 0.3], [155, 1690, 38, 32, 44, 9, 0.3], [335, 1735, 45, 45, 60, 9, 0.3], [290, 1250, 10, 80, 26, 7, 1],
  [340, 1195, 50, 18, 20, 7, 0], [405, 1130, 30, 34, 30, 8, -0.8], [265, 1620, 14, 56, 30, 8, 1], [297, 1440, 8, 90, 24, 6, 1],
  [590, 835, 24, 28, 12, 6, 0.8], [480, 1765, 110, 14, 50, 8, -0.1], [660, 1720, 90, 14, 44, 8, -0.3], [580, 925, 14, 10, 6, 8, 0.2],
  [210, 1690, 30, 40, 22, 5, 0.2],
];

function scatter(list: number[][], seed: number) {
  const r = rng(seed);
  let d = "";
  for (const [cx, cy, rx, ry, n, size, slope] of list) {
    for (let i = 0; i < n; i++) {
      const a = r() * 6.283;
      const q = Math.sqrt(r());
      const x = cx + Math.cos(a) * q * rx;
      const y = cy + Math.sin(a) * q * ry;
      const len = size * (0.25 + r() * r() * 0.9);
      const tilt = Math.atan2(slope, 0.8) + (r() - 0.5) * 1.2;
      const c = Math.cos(tilt);
      const s = Math.sin(tilt);
      const steps = 11;
      for (let k = 0; k < steps; k++) {
        const t = (k / steps) * 6.283;
        const u = Math.cos(t) * len * (0.3 + r());
        const v = Math.sin(t) * len * (0.15 + r() * 0.55);
        d += (k ? "L" : "M") + Math.round(x + u * c - v * s) + " " + Math.round(y + u * s + v * c);
      }
      d += "z";
    }
  }
  return d;
}

function streams(seed: number) {
  const r = rng(seed);
  let d = "";
  for (let i = 0; i < 90; i++) {
    let x = 480 + r() * 460;
    let y = i < 40 ? 130 + r() * 800 : 930 + r() * 760;
    if (i > 60) x = 310 + r() * 330;
    const dir = r() * 3;
    d += "M" + Math.round(x) + " " + Math.round(y);
    for (let k = 0; k < 9; k++) {
      x += Math.cos(dir) * 7 + (r() - 0.5) * 16;
      y += Math.sin(dir) * 7 + (r() - 0.5) * 14;
      d += "L" + Math.round(x) + " " + Math.round(y);
    }
  }
  return d;
}

function rough(points: string, amp: number, seed: number) {
  const r = rng(seed);
  const p = points.split(" ").map((s) => s.split(",").map(Number));
  const out: string[] = [];
  for (let i = 0; i < p.length - 1; i++) {
    const [x0, y0] = p[i];
    const [x1, y1] = p[i + 1];
    const n = Math.max(1, Math.round(Math.hypot(x1 - x0, y1 - y0) / 9));
    for (let k = 0; k < n; k++) {
      const t = k / n;
      const j = k ? amp : 0;
      out.push(`${Math.round(x0 + (x1 - x0) * t + (r() - 0.5) * j)},${Math.round(y0 + (y1 - y0) * t + (r() - 0.5) * j)}`);
    }
  }
  out.push(p[p.length - 1].join(","));
  return out.join(" ");
}

const eastBorder =
  "608,328 618,320 625,295 635,280 655,275 662,250 665,190 672,150 705,115 708,100 742,105 765,95 775,82 798,77 815,120 862,138 877,175 862,210 845,225 850,250 825,272 848,280 828,330 840,392 885,410 910,455 932,480 905,545 875,605 905,680 945,760 955,810 930,820 925,885 943,893 940,905 925,930 928,958 962,962 965,1020 990,1045 1000,1075 985,1115 960,1135 1000,1175 1035,1195 1065,1225 1090,1270 1060,1350 1020,1400 960,1500 925,1540 885,1580 850,1620 805,1670";
const westBorder =
  "608,328 575,300 550,283 540,298 503,313 480,298 455,293 452,270 420,200 398,190 380,205 382,235 366,222 352,230 370,245 380,265 400,290 435,332 480,350 495,375 500,395 525,430 515,450 518,480 510,508 528,520 515,545 520,570 535,612 535,640 515,685 517,720 528,735 540,785";
const coast =
  "540,785 570,797 600,815 622,840 630,900 632,925 625,940 600,960 560,980 530,1020 505,1055 490,1085 455,1120 430,1150 405,1180 385,1205 350,1225 325,1220 305,1250 290,1290 300,1330 290,1370 305,1410 300,1470 312,1505 300,1550 290,1570 278,1600 290,1630 320,1670 345,1695 360,1720 350,1750 400,1790 430,1775 470,1760 530,1750 565,1742 610,1720 650,1710 700,1685 740,1670 805,1670";

const wNodes = westBorder.split(" ");
const eNodes = eastBorder.split(" ");
const finland = wNodes.join(" ") + " " + rough(coast, 10, 5) + " " + eNodes.slice().reverse().join(" ");

const roads = [
  "740,105 742,150 752,165 750,245 738,270 765,300 770,340 745,410 725,430 722,490 713,525 717,570 688,615 690,655 670,675 653,678",
  "713,525 750,540 773,570 773,600 765,645 710,660 680,675 653,678",
  "765,645 805,648 810,665 850,695 885,720 885,770 893,790 870,840 882,880 870,955",
  "885,770 850,810 820,838 780,860 735,867",
  "653,678 628,690 620,728 590,740 570,790",
  "435,332 480,350 500,385 525,430 520,500 535,545 545,610 532,650 515,690 520,725 540,785 570,795",
  "632,925 625,960 595,1000 590,1040 570,1085 555,1115",
  "632,925 640,1000 660,1030 655,1080 650,1145 632,1205 650,1260 640,1390",
  "625,945 570,980 510,1060 453,1118 410,1175 375,1225 330,1233",
  "510,1055 560,1080 620,1140 690,1152 752,1170 760,1130 790,1062 820,1030",
  "453,1118 555,1115 620,1105 690,1080 780,1082",
  "453,1118 480,1165 545,1225 560,1260 600,1295 625,1310 640,1390",
  "820,1030 870,1020 950,1005",
  "790,1062 840,1105 880,1160 940,1250 957,1325",
  "752,1170 780,1240 787,1285 800,1340 805,1410",
  "787,1285 840,1270 880,1310 953,1328",
  "787,1285 850,1285 900,1320 953,1328 900,1335 840,1355 805,1385 740,1400 700,1395 642,1393",
  "953,1328 985,1375 1018,1397 M985,1375 965,1470 930,1540 870,1590 838,1595",
  "330,1233 370,1260 420,1290 M370,1258 550,1257 M410,1175 435,1230 430,1300 420,1290 425,1420 415,1455 450,1510 483,1514",
  "330,1233 325,1290 305,1340 305,1400 315,1460 316,1505 325,1545 370,1550 430,1520 483,1514",
  "316,1510 483,1514 M316,1508 350,1475 430,1430 410,1350 370,1270",
  "420,1290 470,1340 550,1335 560,1360 642,1375",
  "642,1393 615,1430 590,1460 550,1480 500,1500 483,1514",
  "425,1390 500,1385 642,1393 720,1460 760,1490",
  "642,1393 700,1393 805,1388 M805,1400 860,1430 920,1460 935,1490 925,1540",
  "483,1514 480,1560 500,1590 530,1600 550,1660 560,1700 566,1741",
  "483,1514 520,1560 560,1580 600,1600 627,1606 680,1622 713,1624",
  "642,1393 610,1450 590,1500 600,1560 627,1606 600,1640 560,1660",
  "760,1490 755,1420 750,1330 M760,1490 765,1540 750,1600 713,1624 780,1620 838,1595",
  "760,1490 720,1520 640,1580 627,1606 M760,1490 780,1560 838,1595",
  "713,1624 740,1670 790,1670 850,1625 M740,1670 640,1705 566,1741",
  "713,1624 660,1640 600,1700 580,1735",
  "345,1680 400,1650 450,1640 490,1610 530,1600 M345,1680 300,1600 290,1565 400,1540 483,1514",
  "345,1680 440,1700 510,1710 566,1741 M345,1680 430,1640 M400,1790 480,1735 550,1690 600,1640",
  "415,1700 420,1730 470,1752 566,1741",
];

const places: { t: string[]; x: number; y: number; k?: "c" | "s" | "d"; px?: number; py?: number }[] = [
  { t: ["ROVANIEMI"], x: 657, y: 718, k: "c", px: 653, py: 678 },
  { t: ["OULU", "ULEÅBORG"], x: 652, y: 898, k: "d", px: 632, py: 926 },
  { t: ["KOKKOLA", "KARLEBY"], x: 307, y: 1077, k: "c", px: 454, py: 1119 },
  { t: ["KAJAANI", "KAJANA"], x: 820, y: 1073, k: "c", px: 792, py: 1062 },
  { t: ["VAASA", "VASA"], x: 219, y: 1210, k: "s", px: 331, py: 1233 },
  { t: ["SEINÄJOKI"], x: 441, y: 1298, k: "c", px: 420, py: 1290 },
  { t: ["KUOPIO"], x: 662, y: 1268, k: "s", px: 787, py: 1285 },
  { t: ["JOENSUU"], x: 973, y: 1314, k: "s", px: 953, py: 1328 },
  { t: ["JYVÄSKYLÄ"], x: 567, y: 1376, k: "d", px: 642, py: 1393 },
  { t: ["MIKKELI", "S:T MICHEL"], x: 772, y: 1472, k: "c", px: 760, py: 1490 },
  { t: ["TAMPERE", "TAMMERFORS"], x: 501, y: 1485, k: "d", px: 483, py: 1514 },
  { t: ["PORI"], x: 218, y: 1486 },
  { t: ["BJÖRNEBORG"], x: 79, y: 1517, k: "s", px: 316, py: 1504 },
  { t: ["HÄMEENLINNA", "TAVASTEHUS"], x: 307, y: 1583, k: "c", px: 530, py: 1601 },
  { t: ["LAHTI", "LAHTIS"], x: 644, y: 1577, k: "s", px: 627, py: 1606 },
  { t: ["LAPPEENRANTA", "VILLMANSTRAND"], x: 853, y: 1581, k: "s", px: 838, py: 1595 },
  { t: ["KOUVOLA"], x: 725, y: 1658, k: "c", px: 713, py: 1624 },
  { t: ["TURKU", "ÅBO"], x: 217, y: 1672, k: "d", px: 346, py: 1680 },
  { t: ["MARIEHAMN", "MAARIANHAMINA"], x: 84, y: 1768, k: "c", px: 147, py: 1721 },
  { t: ["HELSINKI", "HELSINGFORS"], x: 585, y: 1773, k: "d", px: 566, py: 1741 },
];

const SEA = "#b3e5fa";
const LAKE = "#85c1ea";

function FinlandMap() {
  return (
    <svg viewBox="12 12 1161 1884" role="img" aria-label="Suomen taustakartta" className="h-[628px] w-[387px] shrink-0 overflow-hidden">
      <defs>
        <clipPath id="land"><polygon points={finland} /></clipPath>
        <clipPath id="labelEdge"><rect x="0" y="0" width="1100" height="1896" /></clipPath>
      </defs>
      <rect x="12" y="12" width="1161" height="1884" fill="#cccccc" />

      <g fill={SEA} stroke="none">
        <polygon points={rough("12,12 290,12 275,35 262,75 240,85 245,105 215,112 205,125 165,140 150,165 140,190 120,205 110,235 75,240 60,235 50,215 75,190 92,155 70,165 40,190 12,205 12,12", 14, 3)} />
        <polygon points={rough("968,12 1173,12 1173,183 1150,180 1110,165 1080,145 1040,140 1000,125 950,120 930,105 890,100 850,78 832,66 870,70 920,65 960,45 968,12", 9, 9)} />
        <polygon points={rough("545,790 500,793 460,787 435,775 410,800 385,838 350,858 355,890 345,920 322,945 320,965 345,1000 330,1040 290,1080 260,1105 230,1130 190,1155 160,1160 110,1195 90,1220 60,1250 30,1295 12,1302 12,1665 55,1675 45,1710 62,1760 40,1810 12,1850 12,1896 460,1896 490,1862 540,1855 580,1842 640,1835 700,1845 740,1840 760,1858 830,1870 835,1830 870,1812 900,1800 950,1787 1010,1790 1010,1765 960,1740 890,1725 880,1690 875,1670 840,1640 700,1200 660,960 645,900 630,830 580,790 545,790", 9, 12)} />
        <polygon points={rough("1000,1550 1010,1510 1040,1470 1080,1490 1120,1520 1173,1555 1173,1720 1130,1715 1115,1770 1090,1770 1075,1720 1050,1712 1032,1670 1030,1630 970,1570 1000,1550", 8, 14)} />
        <polygon points={rough("1065,562 1110,558 1130,580 1173,610 1173,658 1140,645 1120,610 1095,580 1065,562", 8, 15)} />
        <polygon points="1145,700 1173,690 1173,696" />
        <polygon points="640,20 652,12 682,12 655,30 635,75 622,75" />
      </g>
      <g fill="#cccccc">
        <polygon points={rough("1025,95 1050,100 1095,112 1092,138 1060,142 1035,125 1025,95", 7, 17)} />
        <polygon points={rough("48,200 60,175 92,150 90,170 70,190 48,200", 5, 18)} />
        <polygon points={rough("12,1665 30,1680 55,1700 48,1740 62,1765 38,1800 12,1830 12,1665", 8, 19)} />
        <polygon points={rough("165,140 190,125 205,128 190,150 165,165 165,140", 5, 21)} />
      </g>
      <g fill="none" stroke={SEA} strokeWidth="8" strokeLinejoin="round">
        {[
          "265,60 330,50 380,20 440,30 520,15 500,50 530,85", "380,20 390,80 370,110 400,120 450,110", "330,50 345,95 300,110 280,150 300,170",
          "345,95 360,130 345,180 330,205", "240,100 230,140 260,165 290,190", "215,110 210,150 190,170", "300,30 290,80 320,120 310,180",
          "140,190 165,215 200,230", "110,235 135,260 175,250", "12,240 45,250 60,290 110,300 165,310", "12,300 50,310 90,290 150,290",
          "12,345 40,340 60,330 55,390 65,405", "12,380 30,385 45,360", "75,240 60,270 40,280", "12,435 25,433", "420,25 410,65 440,95",
          "470,15 485,55 455,85", "1120,165 1135,195 1105,230", "930,105 925,140", "905,100 890,140", "805,12 808,48", "12,195 50,235 90,225 115,245 90,285",
          "1110,560 1125,610 1173,640", "160,150 125,190 150,230", "270,75 285,40 320,20 360,60", "12,270 40,275 70,300 100,320", "250,110 275,120 300,90",
          "12,320 30,325 45,300", "390,45 430,50 470,40 540,60", "350,100 380,95", "225,130 250,150 245,180",
        ].map((p, i) => <polyline key={i} points={rough(p, 18, 30 + i)} />)}
      </g>

      <polygon points={finland} fill="#d8f0e2" />
      <polygon points={rough("125,1680 150,1662 175,1680 170,1705 150,1730 135,1715 125,1680", 14, 71)} fill="#d8f0e2" />
      <polyline points={rough(coast, 10, 5)} fill="none" stroke={LAKE} strokeWidth="4" />
      <g clipPath="url(#land)">
        <path d={streams(88)} fill="none" stroke="#cde6d8" strokeWidth="2" />
        <path d={streams(41)} fill="none" stroke={LAKE} strokeWidth="2.500" strokeLinejoin="round" />
        <path d={scatter(clusters, 7)} fill={SEA} stroke={LAKE} strokeWidth="2.800" />
        <g fill="none" stroke={LAKE} strokeWidth="3.500">
          {[
            "845,135 760,185 750,250 700,270 640,290", "530,320 540,355 580,410 605,450 600,550 630,600 640,670", "615,360 660,370 710,355 770,330",
            "870,415 850,500 815,530 820,545 880,580", "645,390 690,405 715,410", "455,290 448,325 435,330", "385,235 440,245", "610,805 660,770 700,750 740,740",
            "640,870 700,850 730,800 790,770 850,765", "510,365 560,355 600,335", "430,1160 470,1200 455,1260", "545,1000 600,1040 650,1060", "370,1400 400,1330 410,1290",
            "820,640 815,620 850,620 850,680 915,710", "575,590 560,640 530,690", "870,1135 900,1200 910,1260", "520,1110 540,1180 580,1220",
          ].map((p, i) => <polyline key={i} points={rough(p, 8, 60 + i)} />)}
        </g>
      </g>
      <path d={scatter(skerries, 23)} fill="#bfe6ec" stroke={LAKE} strokeWidth="3" />

      <g fill="none" stroke="#acacac" strokeWidth="5" strokeLinejoin="round">
        {roads.map((d, i) => <path key={i} d={"M" + d} />)}
        <path d="M570,795 605,818 625,845 630,925 M632,926 700,985 750,1005 790,1028 820,1035 M570,790 590,742 620,728" strokeWidth="8" />
      </g>

      <g fill="none" strokeLinejoin="round">
        <polyline points={rough(eastBorder, 4, 2)} stroke="#a898cf" strokeWidth="6" />
        <polyline points={westBorder} stroke="#a898cf" strokeWidth="5" />
        <polyline points="370,245 400,290 435,332 480,350 500,385" stroke="#a6a0ae" strokeWidth="6" />
        <polyline points="765,1736 785,1728 800,1705 805,1670" stroke="#a898cf" strokeWidth="6" />
        <polyline
          points="541,790 540,870 525,935 515,980 480,1000 450,1020 440,1040 395,1080 385,1110 350,1135 310,1145 260,1165 240,1190 225,1230 235,1280 248,1360 250,1430 235,1550 200,1595 160,1620 100,1630 78,1700 100,1750 170,1835 210,1827 265,1840 345,1840 370,1825 430,1815 520,1790 580,1780"
          stroke="#b08cd0" strokeWidth="3" strokeDasharray="34 5"
        />
        <polyline points="695,1742 740,1738 765,1736" stroke="#b08cd0" strokeWidth="3" />
        <polyline points="100,1630 78,1700 90,1735" stroke="#a898cf" strokeWidth="5" />
      </g>

      {places.map((p) =>
        p.k ? (
          <g key={p.t[0]} fill="#f6c8dc" stroke="#87757e" strokeWidth="3">
            {p.k === "c" ? <circle cx={p.px} cy={p.py} r="8" /> : <rect x={p.px! - 10} y={p.py! - 10} width="20" height="20" />}
            {p.k === "d" && <circle cx={p.px} cy={p.py} r="2.500" fill="#75656c" />}
          </g>
        ) : null,
      )}
      <g fontSize="30" fontWeight="bold" fill="#544f52" className="font-['Liberation_Sans']">
        {places.map((p) => (
          <text key={p.t[0]} clipPath={p.t.length > 1 ? "url(#labelEdge)" : undefined}>
            {p.t.map((line, i) => <tspan key={line} x={p.x} y={p.y + i * 30}>{line}</tspan>)}
          </text>
        ))}
      </g>
    </svg>
  );
}

/* ---------- search dock ---------- */

const results: { name: string; kind: string; bg: string; thumb?: boolean }[] = [
  { name: "Kapsi - ortoilmakuva", kind: "WMS", bg: "bg-white" },
  { name: "Kapsi - ortoilmakuva TMS", kind: "TMS", bg: "bg-[#e9e7e3]" },
  { name: "Kapsi - ortoilmakuva TMS 3067", kind: "TMS", bg: "bg-white" },
  { name: "Kapsi - peruskartta", kind: "WMS", bg: "bg-[#e9e7e3]" },
  { name: "Kapsi - peruskartta TMS", kind: "TMS", bg: "bg-white", thumb: true },
  { name: "Kapsi - peruskartta TMS 3067", kind: "TMS", bg: "bg-[#e9e7e3]" },
  { name: "Kapsi - taustakartta", kind: "WMS", bg: "bg-[#f0f0f0]" },
  { name: "Kapsi - taustakartta TMS", kind: "TMS", bg: "bg-[#e9e7e3]" },
  { name: "Kapsi - taustakartta TMS 3067", kind: "TMS", bg: "bg-white" },
];

const tahoma = "font-['DejaVu_Sans_Condensed','DejaVu_Sans',sans-serif]";

function SearchDock() {
  return (
    <aside className="flex w-[249px] shrink-0 flex-col overflow-hidden">
      <DockTitle title="Search QMS" />
      <div className="mt-px flex h-[22px] shrink-0 items-center rounded-xs border border-[#b9b9b9] bg-white pr-[6px]">
        <input aria-label="Hae palveluita" defaultValue="kapsi" className={"min-w-0 flex-1 bg-transparent pl-[2px] text-[13px] outline-none " + tahoma} />
        <button type="button" aria-label="Tyhjennä">
          <svg viewBox="0 0 12 9" className="h-[9px] w-3"><path d="M4 0h8v9H4L0 4.500z" fill="#8a8a8a" /><path d="M5 2.500l4 4M9 2.500l-4 4" stroke="#fff" strokeWidth="1.300" /></svg>
        </button>
      </div>
      <div className={"flex shrink-0 items-center justify-end gap-[5px] pt-1 pb-[5px] text-[13px] " + tahoma}>
        <button type="button" className="h-[25px] w-[97px] rounded-xs border border-[#b9b9b9] bg-[#f6f6f6] whitespace-nowrap">Filter by extent</button>
        <span className="relative flex w-[78px] items-center">
          <select aria-label="Tyyppi" className="h-[23px] w-full appearance-none rounded-xs border border-[#b9b9b9] bg-linear-to-b from-white to-[#ececec] pl-1">
            <option>All</option>
          </select>
          <span className="pointer-events-none absolute right-[9px] flex"><Arrow /></span>
        </span>
      </div>
      <div className="flex min-h-0 flex-1 flex-col border border-[#b9b9b9] bg-white">
        <ul className={"min-h-0 flex-1 overflow-hidden pt-px text-[13px] leading-4 text-black " + tahoma}>
          {results.map((r) => (
            <li key={r.name} className={"flex w-[290px] items-center py-2 pl-1 " + r.bg}>
              {r.thumb ? <Thumb /> : <MapSheet />}
              <div className="w-[195px] shrink-0 pl-[7px]">
                <div className="max-w-[184px] font-bold">{r.name}</div>
                <div className="whitespace-nowrap">
                  {r.kind} <a href="#details" className="text-[#1414ee] underline">details</a>, <a href="#report" className="text-[#1414ee] underline">report a problem</a>
                </div>
              </div>
              <span className="size-[9px] shrink-0 rounded-full bg-[#0a800a]" />
              <button type="button" aria-label={"Lisää " + r.name} className="ml-[9px] flex h-[22px] w-[40px] shrink-0 items-end rounded-xs border border-[#adadad] bg-[#fbfbfb] pb-[3px] pl-[6px]">
                <svg viewBox="0 0 8 8" className="size-2"><path d="M0 8l4-8 4 8z" fill="#d99a1c" /></svg>
              </button>
            </li>
          ))}
        </ul>
        <div className="flex h-[18px] shrink-0 border-t border-[#c3c3c3] bg-[#e6e6e6]">
          <ScrollArrow label="Vieritä vasemmalle" d="M7.500 0v10L2.500 5z" />
          <div className="flex-1 border-x border-[#c9c9c9] bg-linear-to-b from-[#fdfdfd] to-[#f0f0f0]" />
          <div className="w-[26px]" />
          <ScrollArrow label="Vieritä oikealle" d="M2.500 0v10L7.500 5z" />
        </div>
      </div>
      <div className={"mt-[3px] mb-[3px] flex h-[27px] shrink-0 items-center justify-center border border-[#c3c3c3] text-[13px] " + tahoma}>
        <svg viewBox="0 0 10 10" className="mr-[7px] size-[10px]"><path d="M5 0c3 0 3 3 3 5l1.500 2.500h-9L2 5c0-2 0-5 3-5zM3.500 8.500h3L5 10z" fill="#f9a825" /></svg>
        <p className="whitespace-nowrap"><a href="#fresh" className="text-[#1414ee] underline">Fresh geodata</a> for your project</p>
      </div>
    </aside>
  );
}

/* ---------- status bar ---------- */

function Spin({ id, value, w }: { id: string; value: string; w: string }) {
  return (
    <span className={"flex h-[22px] shrink-0 rounded-xs border border-[#b9b9b9] bg-white " + w}>
      <input id={id} defaultValue={value} className="min-w-0 flex-1 bg-transparent pl-1 outline-none" />
      <button type="button" aria-label="Muuta arvoa" className="flex w-[17px] items-center justify-center border-l border-[#b9b9b9] bg-[#fafafa]">
        <svg viewBox="0 0 10 16" className="h-4 w-[10px]"><path d="M0 6h10L5 1zM0 10h10l-5 5z" fill="#4a4a4a" /></svg>
      </button>
    </span>
  );
}

function StatusBar() {
  return (
    <footer className={"flex h-7 shrink-0 items-center pt-1 pr-[6px] pl-[2px] text-[13px] " + tahoma}>
      <span className="flex h-[22px] w-[167px] items-center rounded-xs border border-[#b9b9b9] bg-white pl-[7px]">
        <svg viewBox="0 0 12 12" className="size-3"><circle cx="5" cy="5" r="3.800" fill="none" stroke="#888" /><path d="M8 8l3.500 3.500" stroke="#888" /></svg>
        <input aria-label="Etsi" placeholder="Etsi (Ctrl+K)" className="min-w-0 flex-1 bg-transparent pl-[5px] outline-none placeholder:text-[#848484]" />
      </span>
      <p className="flex-1 pl-[7px]">1 taso poistettu.</p>
      <label htmlFor="coord" className="w-[74px] whitespace-nowrap">Koordinaatit</label>
      <input id="coord" defaultValue="1094908,6550426" className="h-[22px] w-[122px] rounded-xs border border-[#b9b9b9] bg-white pl-[5px]" />
      <button type="button" aria-label="Laajuus" className="ml-[3px]">
        <Ico><g fill="none" stroke="#222" strokeWidth="1.500"><ellipse cx="7" cy="6" rx="3.500" ry="5" transform="rotate(-25 7 6)" fill="#fff" /><ellipse cx="11" cy="14" rx="5.500" ry="4.500" fill="#fff" /><path d="M4.500 3l6 6M4 7l5-4M6 10l5-5" strokeWidth="1.200" /><path d="M1 12l5 1M2 16l4-1M11 8l7-3" strokeWidth="1.200" /><ellipse cx="11" cy="15" rx="2" ry="1.500" fill="#222" /><path d="M15 3l4-2" strokeWidth="1" /></g></Ico>
      </button>
      <label htmlFor="scale" className="ml-[10px] w-[64px] whitespace-nowrap">Mittakaava</label>
      <span className="relative flex w-[97px] items-center">
        <select id="scale" className="h-[22px] w-full appearance-none rounded-xs border border-[#b9b9b9] bg-linear-to-r from-white from-75% to-[#f0f0f0] to-75% pl-[3px]"><option>1:9415766</option></select>
        <span className="pointer-events-none absolute right-[9px] flex"><Arrow /></span>
      </span>
      <button type="button" aria-label="Lukitse mittakaava" className="mx-[9px]">
        <svg viewBox="0 0 16 19" className="h-[19px] w-4"><path d="M4 9V5.500C4 0 12 0 12 5.500V9" fill="none" stroke="#8b8b8b" strokeWidth="2" /><rect x="0" y="8" width="16" height="11" rx="1" fill="#5e5e5e" /></svg>
      </button>
      <label htmlFor="zoom" className="w-[65px] whitespace-nowrap">Suurennus</label>
      <Spin id="zoom" value="100%" w="w-[87px]" />
      <label htmlFor="rot" className="ml-2 w-[41px] whitespace-nowrap">Kierto</label>
      <Spin id="rot" value="0,0 °" w="w-[84px]" />
      <span className="ml-[6px] flex"><Check label="Piirrä" size="size-4" /></span>
      <label htmlFor="Piirrä" className="ml-2 w-[45px]">Piirrä</label>
      <button type="button" className="flex items-center gap-[3px]">
        <Ico><circle cx="10" cy="10" r="8.500" fill="#777" stroke="#666" /><g fill="none" stroke="#ddd" strokeWidth=".9"><path d="M10 1v18M1 10h18M3 5h14M3 15h14" /><ellipse cx="10" cy="10" rx="4.500" ry="8.500" /></g></Ico>
        EPSG:3067
      </button>
      <button type="button" aria-label="Viestit" className="ml-5">
        <svg viewBox="0 0 21 19" className="h-[19px] w-[21px]"><path d="M10.500 1C16 1 20 4 20 8.500c0 2.500-1.500 4.500-3.500 5.800L18 18.500l-5-2.500h-2.500C5 16 1 13 1 8.500S5 1 10.500 1z" fill="#585858" /><g fill="#fff"><circle cx="6" cy="8.500" r="1.500" /><circle cx="10.500" cy="8.500" r="1.500" /><circle cx="15" cy="8.500" r="1.500" /></g></svg>
      </button>
    </footer>
  );
}

export default function App() {
  return (
    <div className="flex h-screen flex-col overflow-hidden bg-[#f0f0f0] font-['Open_Sans','Noto_Sans',sans-serif] text-[#1a1a1a]">
      <MenuBar />
      <Toolbars />
      <main className="flex min-h-0 flex-1">
        <div className="flex w-[244px] shrink-0 flex-col">
          <Browser />
          <Layers />
        </div>
        <div className="ml-2 flex min-w-0 flex-1 items-center justify-center overflow-hidden border border-[#c3c3c3] bg-white">
          <FinlandMap />
        </div>
        <div className="w-[7px] shrink-0" />
        <SearchDock />
      </main>
      <StatusBar />
    </div>
  );
}
